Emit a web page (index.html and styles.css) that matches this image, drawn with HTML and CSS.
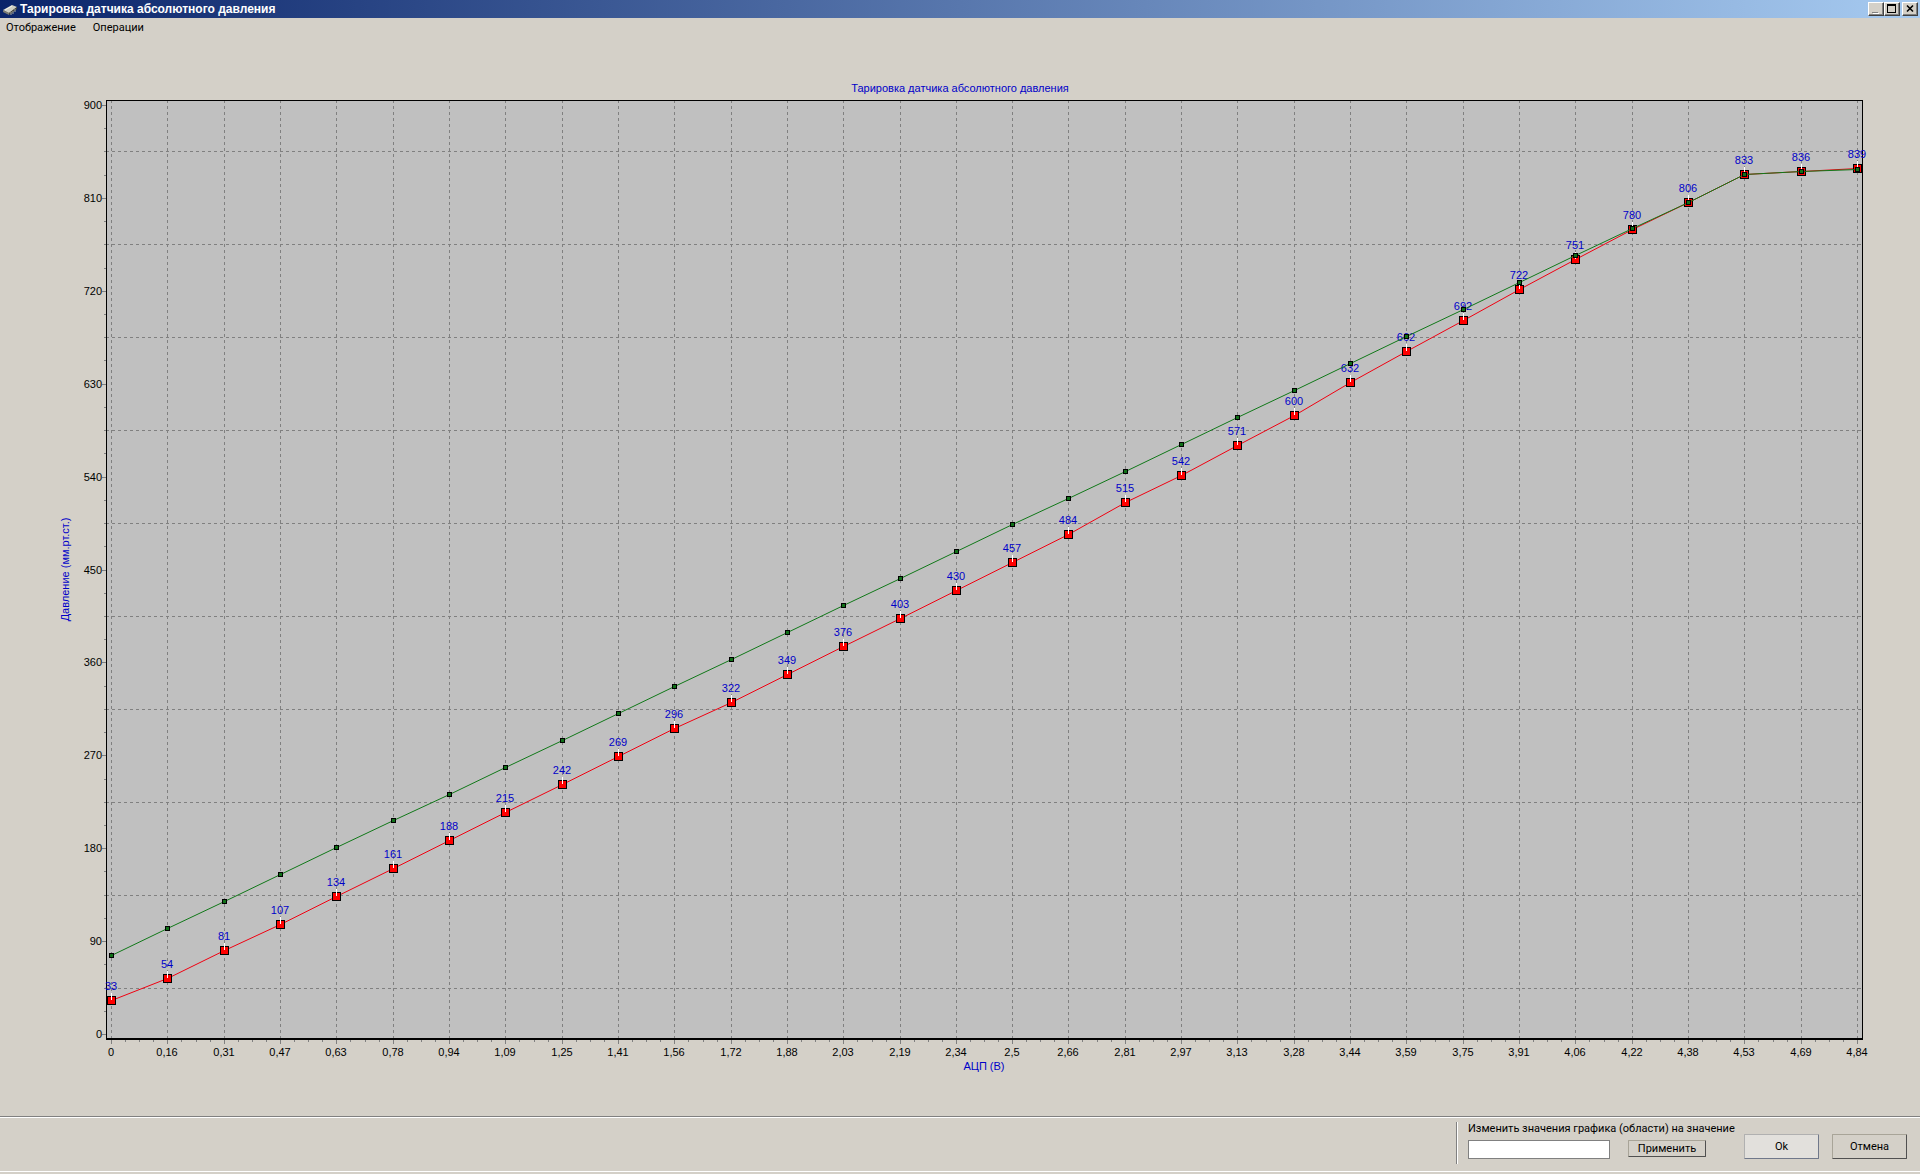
FILE: index.html
```html
<!DOCTYPE html>
<html lang="ru">
<head>
<meta charset="utf-8">
<title>Тарировка датчика абсолютного давления</title>
<link rel="stylesheet" href="styles.css">
</head>
<body>
<div class="window">
  <header class="titlebar">
    <svg class="app-icon" width="16" height="14" viewBox="0 0 16 14" aria-hidden="true">
      <path d="M2 10l9-6 4 2-9 6z" fill="#55606a"/>
      <path d="M1 8l9-5 5 2-8 6z" fill="#d0d0c4"/>
      <path d="M1 8l6 3v2l-6-3z" fill="#7a7a72"/>
      <path d="M7 11l8-6v2l-8 6z" fill="#44443c"/>
      <path d="M3 8l7-4" stroke="#f4f4ec" fill="none"/>
      <path d="M9 10v3M11 9v3M13 7v3" stroke="#a8a8a0" fill="none"/>
    </svg>
    <h1 class="caption">Тарировка датчика абсолютного давления</h1>
    <div class="window-buttons">
      <button class="win-btn" type="button" aria-label="Свернуть"><svg width="12" height="10" viewBox="0 0 12 10" shape-rendering="crispEdges"><path d="M3 9h6v1H3z" fill="#fff"/><path d="M2 8h6v1H2z" fill="#808080"/></svg></button>
      <button class="win-btn" type="button" aria-label="Развернуть"><svg width="12" height="10" viewBox="0 0 12 10" shape-rendering="crispEdges"><path d="M1 0h9v9H1zM2 2v6h7V2z" fill="#000" fill-rule="evenodd"/></svg></button>
      <button class="win-btn win-close" type="button" aria-label="Закрыть"><svg width="12" height="10" viewBox="0 0 12 10"><path d="M3 1.500l6 6M9 1.500l-6 6" stroke="#000" stroke-width="1.600"/></svg></button>
    </div>
  </header>
  <nav class="menu">
    <button class="menu-item" type="button">Отображение</button>
    <button class="menu-item" type="button">Операции</button>
  </nav>
  <main class="chart-area">
    <svg class="chart" id="chart" role="img" aria-label="График давления"></svg>
  </main>
  <footer class="panel">
    <form class="apply-group">
      <label class="apply-label" for="value">Изменить значения графика (области) на значение</label>
      <div class="apply-row">
        <input class="value-input" id="value" type="text">
        <button class="btn btn-apply" type="button">Применить</button>
      </div>
    </form>
    <div class="dialog-buttons">
      <button class="btn btn-large btn-ok" type="button">Ok</button>
      <button class="btn btn-large" type="button">Отмена</button>
    </div>
  </footer>
</div>
<script src="chart.js"></script>
</body>
</html>
```
FILE: styles.css
```css
* { box-sizing: border-box; }

body {
  margin: 0;
  background: #d4d0c8;
  color: #000;
  font: 11px/16px Roboto, Tahoma, sans-serif;
}

button, input { font: inherit; color: inherit; }

.window {
  display: flex;
  flex-direction: column;
  min-height: 100vh;
}

.titlebar {
  display: flex;
  align-items: center;
  height: 18px;
  padding: 0 2px;
  background: linear-gradient(to right, #0a246a, #a6caf0);
}

.app-icon { flex: none; margin-right: 2px; }

.caption {
  flex: 1;
  margin: 0;
  color: #fff;
  font-family: "Liberation Sans", Arial, sans-serif;
  font-size: 12px;
  line-height: 18px;
  font-weight: bold;
}

.window-buttons { display: flex; }

.win-btn {
  display: flex;
  width: 16px;
  height: 14px;
  padding: 1px;
  background: #d4d0c8;
  border: 1px solid;
  border-color: #fff #404040 #404040 #fff;
  box-shadow: inset -1px -1px #808080;
}

.win-close { margin-left: 2px; }

.menu {
  display: flex;
  align-items: center;
  gap: 17px;
  height: 20px;
  padding: 0 6px;
}

.menu-item {
  padding: 0;
  border: 0;
  background: none;
}

.chart-area {
  display: flex;
  flex: 1;
  min-height: 400px;
}

.chart {
  flex: 1;
  width: 100%;
  min-width: 0;
  font-family: "Liberation Sans", Arial, sans-serif;
  font-size: 11px;
}

.plot-bg { fill: #c0c0c0; }
.frame { fill: none; stroke: #000; }
.frame-bottom { fill: none; stroke: #000; stroke-width: 2px; }
.grid { fill: none; stroke: #808080; stroke-dasharray: 3 3; }
.tick { fill: none; stroke: #808080; }
.line-red { fill: none; stroke: #f00010; }
.line-green { fill: none; stroke: #107818; }
.mark-red { fill: #f00; stroke: #000; }
.mark-green { fill: #107018; stroke: #000; }
.stem { stroke: #fff; }
.value, .title { fill: #0000c8; }
.mid { text-anchor: middle; }
.end { text-anchor: end; }

.panel {
  display: flex;
  justify-content: flex-end;
  align-items: flex-start;
  height: 56px;
  margin-bottom: 2px;
  padding: 5px 13px 0 0;
  border-top: 1px solid #808080;
  border-bottom: 1px solid #fff;
  box-shadow: inset 0 1px #fff;
}

.apply-group {
  display: flex;
  flex-direction: column;
  gap: 4px;
  width: 288px;
  height: 42px;
  padding-left: 11px;
  border-left: 1px solid #808080;
  box-shadow: inset 1px 0 #fff;
}

.apply-label { white-space: nowrap; line-height: 14px; }

.apply-row { display: flex; align-items: flex-start; gap: 18px; }

.value-input {
  width: 142px;
  height: 19px;
  padding: 0 2px;
  border: 1px solid #808080;
  background: #fff;
}

.dialog-buttons { display: flex; gap: 13px; padding-top: 12px; }

.btn {
  padding: 0;
  background: #d4d0c8;
  border: 1px solid;
  border-color: #a8a498 #505050 #505050 #a8a498;
  border-radius: 1px;
}

.btn-apply { width: 78px; height: 17px; line-height: 15px; }

.btn-large { width: 75px; height: 25px; }

.btn-ok { background: #e2e0dc; border-color: #b0b0b0 #70788a #70788a #b0b0b0; }
```
FILE: chart.js
```js
const svg = document.getElementById('chart');
const volts = ['0', '0,16', '0,31', '0,47', '0,63', '0,78', '0,94', '1,09', '1,25', '1,41', '1,56', '1,72', '1,88', '2,03', '2,19', '2,34', '2,5', '2,66', '2,81', '2,97', '3,13', '3,28', '3,44', '3,59', '3,75', '3,91', '4,06', '4,22', '4,38', '4,53', '4,69', '4,84'];
const measured = [33, 54, 81, 107, 134, 161, 188, 215, 242, 269, 296, 322, 349, 376, 403, 430, 457, 484, 515, 542, 571, 600, 632, 662, 692, 722, 751, 780, 806, 833, 836, 839];
const base = volts.map((v, i) => (i < 29 ? 76.5 + 26.07 * i : [833, 836, 838][i - 29]));

const margin = { left: 106, right: 58, top: 62, bottom: 77 };

function add(name, cls, attrs, text) {
  const el = document.createElementNS('http://www.w3.org/2000/svg', name);
  el.setAttribute('class', cls);
  for (const key in attrs) el.setAttribute(key, attrs[key]);
  if (text !== undefined) el.textContent = text;
  svg.appendChild(el);
}

function draw() {
  svg.replaceChildren();
  const w = svg.clientWidth, h = svg.clientHeight;
  const left = margin.left, right = w - margin.right;
  const top = margin.top, bottom = h - margin.bottom;
  const x = i => Math.round(left + 5 + i * (right - left - 10) / (volts.length - 1));
  const y = v => Math.round(bottom - 5 - v * (bottom - top - 10) / 900);
  const crisp = { 'shape-rendering': 'crispEdges' };
  const path = (cls, d) => add('path', cls, { d, ...crisp });

  add('rect', 'plot-bg', { x: left, y: top, width: right - left, height: bottom - top });
  for (let v = 45; v < 900; v += 90) path('grid', `M${left} ${y(v) + 0.5}H${right}`);
  volts.forEach((v, i) => path('grid', `M${x(i) + 0.5} ${top}V${bottom}`));
  path('frame', `M${left + 0.5} ${bottom}V${top + 0.5}H${right + 0.5}V${bottom}`);
  path('frame-bottom', `M${left} ${bottom}H${right + 1}`);

  for (let k = 0; k <= 40; k++) {
    path('tick', `M${left - (k % 4 ? 2 : 4)} ${y(k * 22.5) + 0.5}H${left}`);
    if (k % 4 === 0) add('text', 'end', { x: left - 4, y: y(k * 22.5) + 4 }, k * 22.5);
  }
  volts.forEach((v, i) => {
    path('tick', `M${x(i) + 0.5} ${bottom + 1}v4`);
    if (i < volts.length - 1) {
      for (let q = 1; q < 4; q++) {
        path('tick', `M${Math.round(x(i) + q * (x(i + 1) - x(i)) / 4) + 0.5} ${bottom + 1}v2`);
      }
    }
    add('text', 'mid', { x: x(i), y: bottom + 17 }, v);
  });

  const points = data => data.map((v, i) => `${x(i) + 0.5},${y(v) + 0.5}`).join(' ');
  add('polyline', 'line-red', { points: points(measured) });
  measured.forEach((v, i) => {
    add('rect', 'mark-red', { x: x(i) - 3.5, y: y(v) - 3.5, width: 8, height: 8, ...crisp });
    path('stem', `M${x(i) + 0.5} ${y(v) - 7}v7`);
    add('text', 'value mid', { x: x(i), y: y(v) - 10 }, v);
  });
  add('polyline', 'line-green', { points: points(base) });
  base.forEach((v, i) => {
    add('rect', 'mark-green', { x: x(i) - 1.5, y: y(v) - 1.5, width: 4, height: 4, ...crisp });
  });

  const cx = (left + right) / 2;
  const cy = (top + bottom) / 2;
  add('text', 'title mid', { x: w / 2, y: top - 8 }, 'Тарировка датчика абсолютного давления');
  add('text', 'title mid', { x: cx, y: bottom + 31 }, 'АЦП (В)');
  add('text', 'title mid', { transform: `translate(69 ${cy}) rotate(-90)` }, 'Давление (мм.рт.ст.)');
}

draw();
window.addEventListener('resize', draw);
```
